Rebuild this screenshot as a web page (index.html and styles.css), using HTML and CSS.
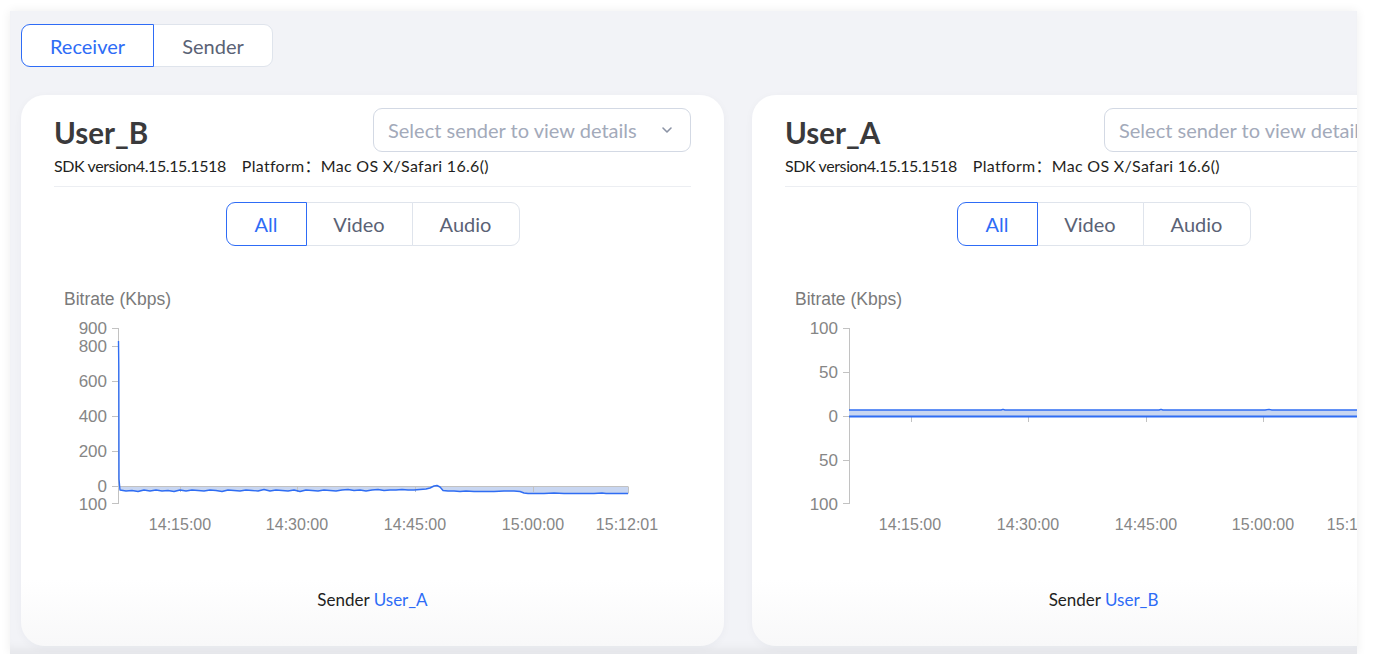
FILE: index.html
```html
<!DOCTYPE html>
<html lang="en">
<head>
<meta charset="utf-8">
<title>Call quality</title>
<link rel="stylesheet" href="styles.css">
</head>
<body>
<div class="panel">
  <div class="role-tabs">
    <button class="role-tab is-active">Receiver</button>
    <button class="role-tab">Sender</button>
  </div>

  <div class="cards">
    <section class="card">
      <div class="card-head">
        <h2 class="user-name">User_B</h2>
        <div class="select">
          <span class="select-placeholder">Select sender to view details</span>
          <svg class="chevron" width="12" height="8" viewBox="0 0 12 8"><path d="M2 2 L6 6 L10 2" fill="none" stroke="#8b93a5" stroke-width="1.6" stroke-linecap="round" stroke-linejoin="round"/></svg>
        </div>
      </div>
      <p class="meta"><span class="sdk">SDK version4.15.15.1518</span><span class="platform">Platform：Mac OS X/Safari 16.6()</span></p>
      <div class="divider"></div>
      <div class="segment-wrap">
        <div class="segment">
          <button class="seg-btn is-active">All</button>
          <button class="seg-btn">Video</button>
          <button class="seg-btn">Audio</button>
        </div>
      </div>
      <svg class="chart" width="637" height="255" viewBox="0 0 637 255">
        <text class="axis-title" x="10" y="21">Bitrate (Kbps)</text>
        <g class="y-labels">
          <text x="53" y="50">900</text>
          <text x="53" y="68">800</text>
          <text x="53" y="103">600</text>
          <text x="53" y="138">400</text>
          <text x="53" y="173">200</text>
          <text x="53" y="208">0</text>
          <text x="53" y="225.5">100</text>
        </g>
        <g class="axis">
          <line x1="64.5" y1="44" x2="64.5" y2="220"/>
          <line x1="58" y1="44.5" x2="64" y2="44.5"/>
          <line x1="58" y1="62.5" x2="64" y2="62.5"/>
          <line x1="58" y1="97.5" x2="64" y2="97.5"/>
          <line x1="58" y1="132.5" x2="64" y2="132.5"/>
          <line x1="58" y1="167.5" x2="64" y2="167.5"/>
          <line x1="58" y1="202.5" x2="64" y2="202.5"/>
          <line x1="58" y1="219.5" x2="64" y2="219.5"/>
        </g>
        <polygon class="area" points="64,202.5 66,206 72,207 78,206.5 84,207.5 90,206 96,207 102,206 108,207 114,206.5 120,207.5 126,206 132,207 138,206 144,206.5 150,207 156,206 162,206.5 168,207.5 174,206 180,206.5 186,207 192,206 198,206.5 204,207 210,205.5 216,207 222,206 228,206.5 234,207 240,206 246,207.5 252,206 258,206.5 264,207 270,206 276,206.5 282,207 288,206 294,205.5 300,206.5 306,206 312,207 318,206 324,205.5 330,206.5 336,206 342,206 348,205.5 354,206 360,206 366,205.5 372,205 376,204 380,202 383,201.5 386,203 389,206.5 394,207 400,207 406,207.5 412,207 420,207.5 430,207.5 440,207.5 450,207 460,207 466,207.5 470,209 474,209.5 480,209.5 490,209.5 500,209 510,209.5 520,209.5 530,209.5 540,209.5 548,209 552,209.5 560,209.5 574,209.5 574,202.5"/>
        <g class="axis">
          <line x1="64" y1="202.5" x2="574" y2="202.5"/>
          <line x1="574.5" y1="202.5" x2="574.5" y2="209.5"/>
          <line x1="126.5" y1="202.5" x2="126.5" y2="208"/>
          <line x1="243.5" y1="202.5" x2="243.5" y2="208"/>
          <line x1="361.5" y1="202.5" x2="361.5" y2="208"/>
          <line x1="479.5" y1="202.5" x2="479.5" y2="208"/>
        </g>
        <polyline class="series" points="64.5,57 64.8,83 65,195 66,206 72,207 78,206.5 84,207.5 90,206 96,207 102,206 108,207 114,206.5 120,207.5 126,206 132,207 138,206 144,206.5 150,207 156,206 162,206.5 168,207.5 174,206 180,206.5 186,207 192,206 198,206.5 204,207 210,205.5 216,207 222,206 228,206.5 234,207 240,206 246,207.5 252,206 258,206.5 264,207 270,206 276,206.5 282,207 288,206 294,205.5 300,206.5 306,206 312,207 318,206 324,205.5 330,206.5 336,206 342,206 348,205.5 354,206 360,206 366,205.5 372,205 376,204 380,202 383,201.5 386,203 389,206.5 394,207 400,207 406,207.5 412,207 420,207.5 430,207.5 440,207.5 450,207 460,207 466,207.5 470,209 474,209.5 480,209.5 490,209.5 500,209 510,209.5 520,209.5 530,209.5 540,209.5 548,209 552,209.5 560,209.5 574,209.5"/>
        <g class="x-labels">
          <text x="126" y="246">14:15:00</text>
          <text x="243" y="246">14:30:00</text>
          <text x="361" y="246">14:45:00</text>
          <text x="479" y="246">15:00:00</text>
          <text x="573" y="246">15:12:01</text>
        </g>
      </svg>
      <p class="sender-line">Sender <span class="link">User_A</span></p>
    </section>

    <section class="card">
      <div class="card-head">
        <h2 class="user-name">User_A</h2>
        <div class="select">
          <span class="select-placeholder">Select sender to view details</span>
          <svg class="chevron" width="12" height="8" viewBox="0 0 12 8"><path d="M2 2 L6 6 L10 2" fill="none" stroke="#8b93a5" stroke-width="1.6" stroke-linecap="round" stroke-linejoin="round"/></svg>
        </div>
      </div>
      <p class="meta"><span class="sdk">SDK version4.15.15.1518</span><span class="platform">Platform：Mac OS X/Safari 16.6()</span></p>
      <div class="divider"></div>
      <div class="segment-wrap">
        <div class="segment">
          <button class="seg-btn is-active">All</button>
          <button class="seg-btn">Video</button>
          <button class="seg-btn">Audio</button>
        </div>
      </div>
      <svg class="chart" width="637" height="255" viewBox="0 0 637 255">
        <text class="axis-title" x="10" y="21">Bitrate (Kbps)</text>
        <g class="y-labels">
          <text x="53" y="50">100</text>
          <text x="53" y="94">50</text>
          <text x="53" y="138">0</text>
          <text x="53" y="182">50</text>
          <text x="53" y="225.5">100</text>
        </g>
        <g class="axis">
          <line x1="64.5" y1="44" x2="64.5" y2="220"/>
          <line x1="58" y1="44.5" x2="64" y2="44.5"/>
          <line x1="58" y1="88.5" x2="64" y2="88.5"/>
          <line x1="58" y1="132.5" x2="64" y2="132.5"/>
          <line x1="58" y1="176.5" x2="64" y2="176.5"/>
          <line x1="58" y1="219.5" x2="64" y2="219.5"/>
        </g>
        <rect class="area" x="64" y="126" width="510" height="6.5"/>
        <g class="axis">
          <line x1="126.5" y1="132.5" x2="126.5" y2="138"/>
          <line x1="243.5" y1="132.5" x2="243.5" y2="138"/>
          <line x1="361.5" y1="132.5" x2="361.5" y2="138"/>
          <line x1="478.5" y1="132.5" x2="478.5" y2="138"/>
        </g>
        <polyline class="series" points="64,126 100,126 150,126 216,126 218,125.3 220,126 300,126 360,126 374,126 376,125.3 378,126 420,126 480,126 484,125.4 487,126 540,126 574,126"/>
        <line class="series thick" x1="64" y1="132.5" x2="574" y2="132.5"/>
        <g class="x-labels">
          <text x="125" y="246">14:15:00</text>
          <text x="243" y="246">14:30:00</text>
          <text x="361" y="246">14:45:00</text>
          <text x="478" y="246">15:00:00</text>
          <text x="573" y="246">15:12:01</text>
        </g>
      </svg>
      <p class="sender-line">Sender <span class="link">User_B</span></p>
    </section>
  </div>
</div>
</body>
</html>
```

FILE: styles.css
```css
* {
  box-sizing: border-box;
}

html, body {
  margin: 0;
  background: #ffffff;
}

body {
  padding: 11px 20px 0 10px;
  height: 654px;
  overflow: hidden;
  font-family: Lato, "Noto Sans", "Noto Sans CJK SC", sans-serif;
}

.panel {
  height: 643px;
  overflow: hidden;
  background: #f2f3f7;
  padding: 13px 0 0 11px;
  box-shadow: 0 0 10px rgba(0, 0, 0, 0.07), inset 0 -12px 10px -6px rgba(0, 0, 0, 0.05);
}

/* role switch */
.role-tabs {
  display: flex;
  height: 43px;
  margin-bottom: 28px;
}

.role-tab {
  font-family: inherit;
  font-size: 20px;
  height: 43px;
  padding: 0;
  background: #ffffff;
  color: #5a6275;
  border: 1px solid #dfe4ec;
  margin-left: -1px;
  cursor: pointer;
}

.role-tab:first-child {
  margin-left: 0;
  border-radius: 9px 0 0 9px;
  width: 133px;
}

.role-tab:last-child {
  border-radius: 0 9px 9px 0;
  width: 120px;
}

.role-tab.is-active {
  color: #2e6cf6;
  border-color: #2e6cf6;
  position: relative;
  z-index: 1;
}

/* cards */
.cards {
  display: flex;
  gap: 28px;
}

.card {
  flex: 0 0 703px;
  height: 551px;
  border-radius: 24px;
  background: linear-gradient(to bottom, #ffffff 88%, #f8f8f9 100%);
  padding: 13px 33px 0;
  box-shadow: 0 2px 8px rgba(30, 40, 70, 0.04);
}

.card-head {
  display: flex;
  justify-content: space-between;
  align-items: flex-start;
}

.user-name {
  margin: 8px 0 0;
  font-size: 29.5px;
  line-height: 34px;
  font-weight: 700;
  color: #3a3a3c;
}

.select {
  width: 318px;
  height: 44px;
  border: 1px solid #d3d9e4;
  border-radius: 9px;
  display: flex;
  align-items: center;
  justify-content: space-between;
  padding: 0 17px 0 14px;
  background: #ffffff;
}

.select-placeholder {
  font-size: 20px;
  color: #a3aaba;
  white-space: nowrap;
}

.chevron {
  flex: none;
}

.meta {
  margin: 3px 0 0;
  font-size: 16px;
  line-height: 22px;
  color: #1f1f22;
  white-space: nowrap;
  display: flex;
  gap: 16px;
}

.meta .sdk {
  letter-spacing: -0.4px;
}

.meta .platform {
  letter-spacing: 0.3px;
}

.divider {
  margin-top: 9px;
  border-top: 1px solid #eceef2;
}

.segment-wrap {
  display: flex;
  justify-content: center;
  margin-top: 15px;
}

.segment {
  display: flex;
  height: 44px;
}

.seg-btn {
  font-family: inherit;
  font-size: 20px;
  height: 44px;
  padding: 0;
  background: #ffffff;
  color: #5a6275;
  border: 1px solid #dfe4ec;
  margin-left: -1px;
  cursor: pointer;
}

.seg-btn:first-child {
  margin-left: 0;
  border-radius: 9px 0 0 9px;
  width: 81px;
}

.seg-btn:nth-child(2) {
  width: 107px;
}

.seg-btn:last-child {
  border-radius: 0 9px 9px 0;
  width: 108px;
}

.seg-btn.is-active {
  color: #2e6cf6;
  border-color: #2e6cf6;
  position: relative;
  z-index: 1;
}

/* bitrate chart */
.chart {
  display: block;
  margin-top: 38px;
  overflow: visible;
}

.chart text {
  font-family: "Liberation Sans", Arial, sans-serif;
  font-size: 16px;
  fill: #868686;
}

.chart .axis-title {
  font-size: 17.5px;
  fill: #7a7a7a;
}

.chart .y-labels text {
  text-anchor: end;
  font-size: 17px;
}

.chart .x-labels text {
  text-anchor: middle;
}

.chart .axis line {
  stroke: #c2c2c2;
  stroke-width: 1;
}

.chart .area {
  fill: #c8d6f1;
}

.chart .series {
  fill: none;
  stroke: #2f6df3;
  stroke-width: 1.4;
  stroke-linejoin: round;
}

.chart .series.thick {
  stroke-width: 2;
}

.sender-line {
  margin: 50px 0 0;
  text-align: center;
  font-size: 17px;
  line-height: 22px;
  color: #1f1f22;
}

.link {
  color: #2e6cf6;
}
```
